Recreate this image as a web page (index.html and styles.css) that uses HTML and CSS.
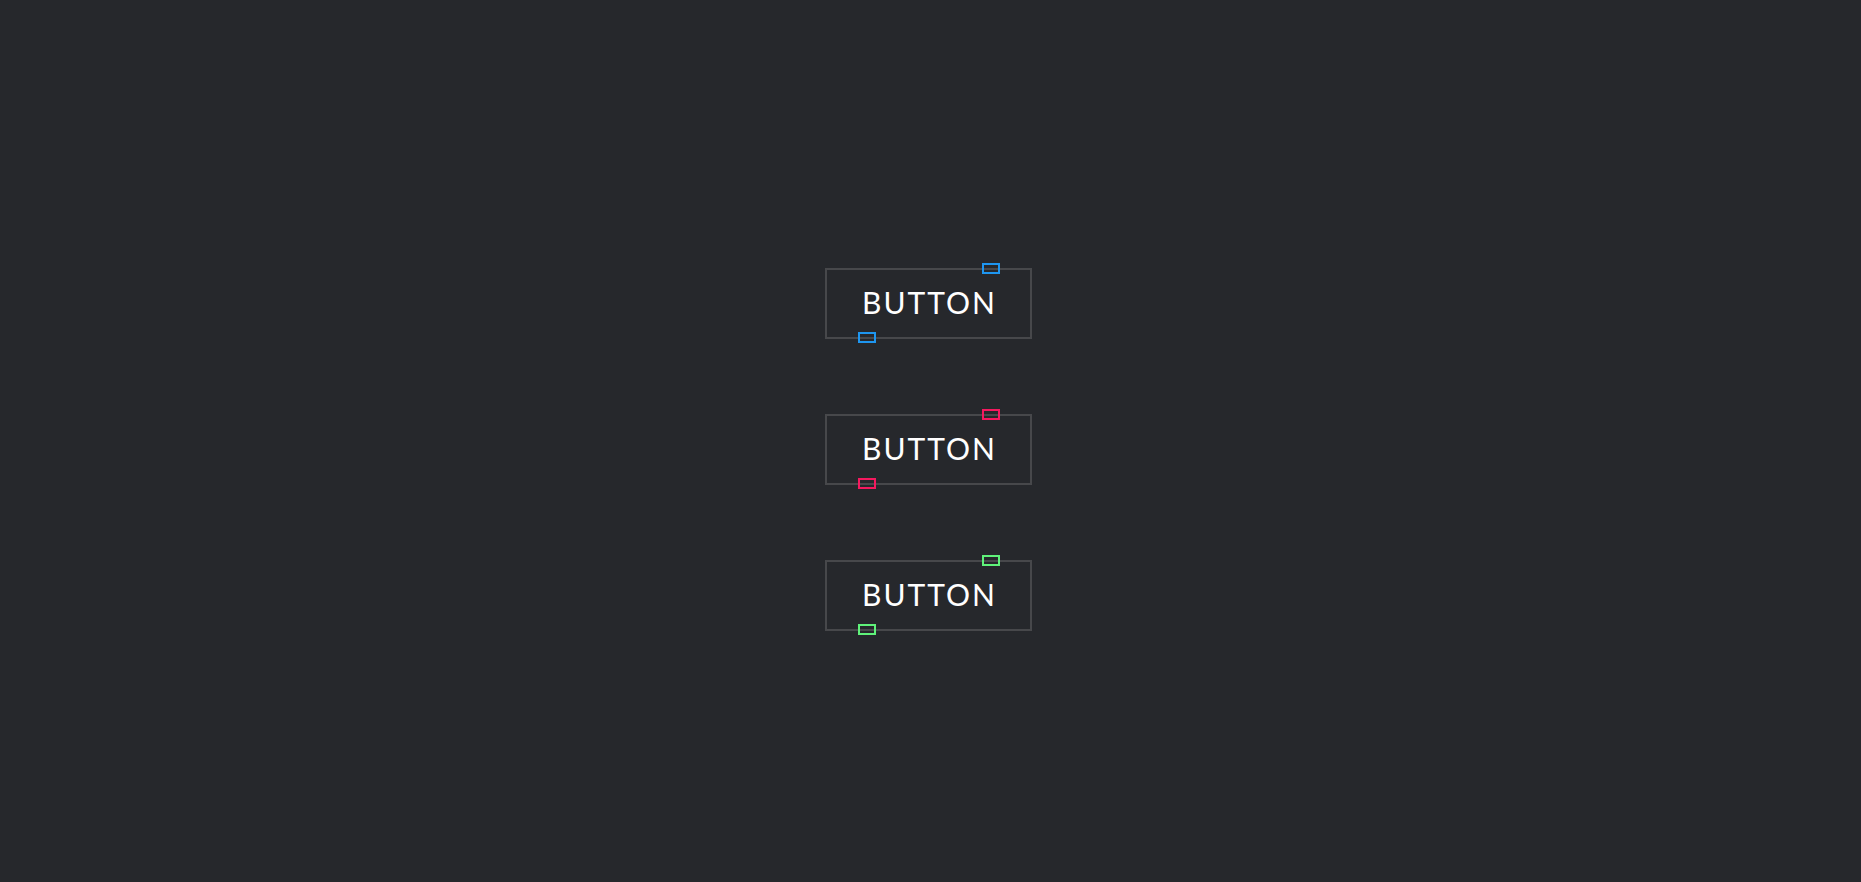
FILE: index.html
```html
<!DOCTYPE html>
<html>
<head>
<meta charset="utf-8">
<link rel="stylesheet" href="styles.css">
</head>
<body>
<main class="stack">
  <button class="btn btn-blue"><span class="mark mark-top"></span>BUTTON<span class="mark mark-bottom"></span></button>
  <button class="btn btn-pink"><span class="mark mark-top"></span>BUTTON<span class="mark mark-bottom"></span></button>
  <button class="btn btn-green"><span class="mark mark-top"></span>BUTTON<span class="mark mark-bottom"></span></button>
</main>
</body>
</html>
```
FILE: styles.css
```css
html, body {
  margin: 0;
  height: 100%;
}
body {
  background: #26282c;
}
.stack {
  height: 100%;
  box-sizing: border-box;
  padding-top: 17px;
  padding-right: 4px;
  display: flex;
  flex-direction: column;
  align-items: center;
  justify-content: center;
  gap: 75px;
}
.btn {
  position: relative;
  width: 207px;
  height: 71px;
  box-sizing: border-box;
  border: 2px solid #47484b;
  background: transparent;
  color: #ffffff;
  font-family: Lato, "Liberation Sans", sans-serif;
  font-size: 30px;
  font-weight: 400;
  letter-spacing: 2px;
  line-height: 1;
  padding: 0 0 4px 2px;
  margin: 0;
}
.mark {
  position: absolute;
  width: 18px;
  height: 11px;
  box-sizing: border-box;
  border: 2px solid;
}
.mark-top {
  left: 155px;
  top: -7px;
}
.mark-bottom {
  left: 31px;
  top: 62px;
}
.btn-blue .mark { border-color: #1e96f0; }
.btn-pink .mark { border-color: #f5195f; }
.btn-green .mark { border-color: #5ff27a; }
```
